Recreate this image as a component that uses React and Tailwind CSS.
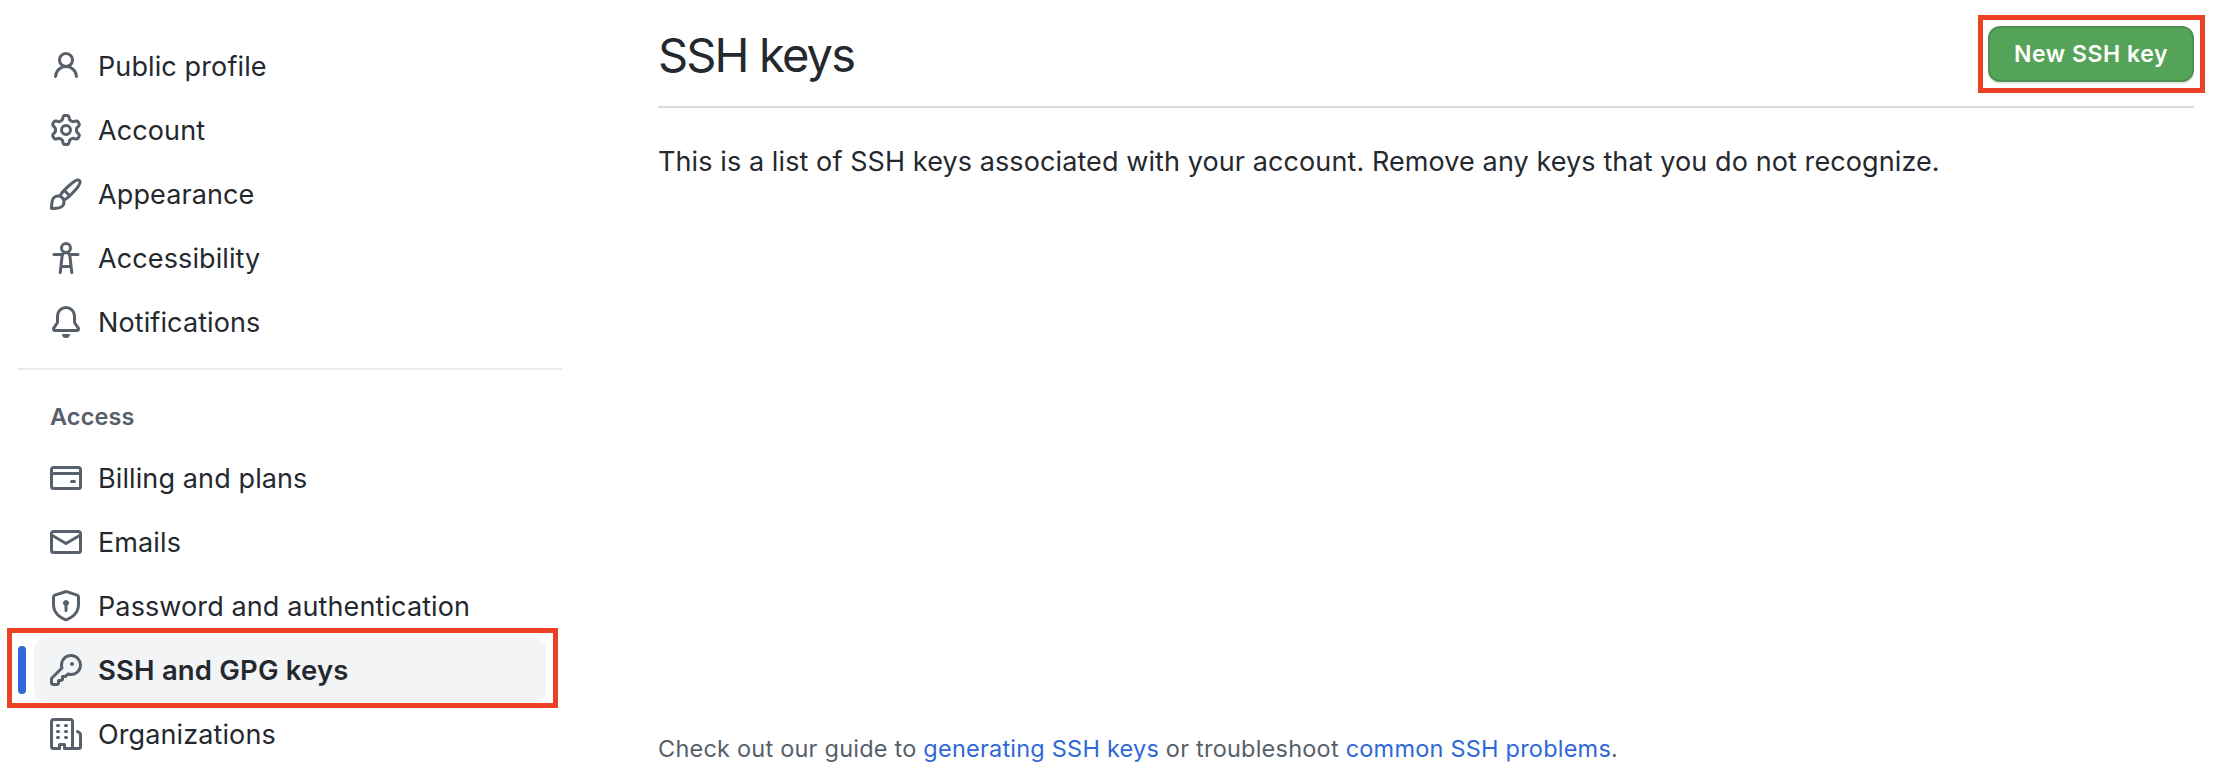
const ICONS = {
  person: "M10.561 8.073a6.005 6.005 0 0 1 3.432 5.142.75.75 0 1 1-1.498.07 4.5 4.5 0 0 0-8.99 0 .75.75 0 0 1-1.498-.07 6.004 6.004 0 0 1 3.431-5.142 3.999 3.999 0 1 1 5.123 0ZM10.5 5a2.5 2.5 0 1 0-5 0 2.5 2.5 0 0 0 5 0Z",
  gear: "M8 0a8.2 8.2 0 0 1 .701.031C9.444.095 9.99.645 10.16 1.29l.288 1.107c.018.066.079.158.212.224.231.114.454.243.668.386.123.082.233.09.299.071l1.103-.303c.644-.176 1.392.021 1.82.63.27.385.506.792.704 1.218.315.675.111 1.422-.364 1.891l-.814.806c-.049.048-.098.147-.088.294.016.257.016.515 0 .772-.01.147.038.246.088.294l.814.806c.475.469.679 1.216.364 1.891a7.977 7.977 0 0 1-.704 1.217c-.428.61-1.176.807-1.82.63l-1.102-.302c-.067-.019-.177-.011-.3.071a5.909 5.909 0 0 1-.668.386c-.133.066-.194.158-.211.224l-.29 1.106c-.168.646-.715 1.196-1.458 1.26a8.006 8.006 0 0 1-1.402 0c-.743-.064-1.289-.614-1.458-1.26l-.289-1.106c-.018-.066-.079-.158-.212-.224a5.738 5.738 0 0 1-.668-.386c-.123-.082-.233-.09-.299-.071l-1.103.303c-.644.176-1.392-.021-1.82-.63a8.12 8.12 0 0 1-.704-1.218c-.315-.675-.111-1.422.363-1.891l.815-.806c.05-.048.098-.147.088-.294a6.214 6.214 0 0 1 0-.772c.01-.147-.038-.246-.088-.294l-.815-.806C.635 6.045.431 5.298.746 4.623a7.92 7.92 0 0 1 .704-1.217c.428-.61 1.176-.807 1.82-.63l1.102.302c.067.019.177.011.3-.071.214-.143.437-.272.668-.386.133-.066.194-.158.211-.224l.29-1.106C6.009.645 6.556.095 7.299.03 7.53.01 7.764 0 8 0Zm-.571 1.525c-.036.003-.108.036-.137.146l-.289 1.105c-.147.561-.549.967-.998 1.189-.173.086-.34.183-.5.29-.417.278-.97.423-1.529.27l-1.103-.303c-.109-.03-.175.016-.195.045-.22.312-.412.644-.573.99-.014.031-.021.11.059.19l.815.806c.411.406.562.957.53 1.456a4.709 4.709 0 0 0 0 .582c.032.499-.119 1.05-.53 1.456l-.815.806c-.081.08-.073.159-.059.19.162.346.353.677.573.989.02.03.085.076.195.046l1.102-.303c.56-.153 1.113-.008 1.53.27.161.107.328.204.501.29.447.222.85.629.997 1.189l.289 1.105c.029.109.101.143.137.146a6.6 6.6 0 0 0 1.142 0c.036-.003.108-.036.137-.146l.289-1.105c.147-.561.549-.967.998-1.189.173-.086.34-.183.5-.29.417-.278.97-.423 1.529-.27l1.103.303c.109.029.175-.016.195-.045.22-.313.411-.644.573-.99.014-.031.021-.11-.059-.19l-.815-.806c-.411-.406-.562-.957-.53-1.456a4.709 4.709 0 0 0 0-.582c-.032-.499.119-1.05.53-1.456l.815-.806c.081-.08.073-.159.059-.19a6.464 6.464 0 0 0-.573-.989c-.02-.03-.085-.076-.195-.046l-1.102.303c-.56.153-1.113.008-1.53-.27a4.44 4.44 0 0 0-.501-.29c-.447-.222-.85-.629-.997-1.189l-.289-1.105c-.029-.11-.101-.143-.137-.146a6.6 6.6 0 0 0-1.142 0ZM11 8a3 3 0 1 1-6 0 3 3 0 0 1 6 0ZM9.5 8a1.5 1.5 0 1 0-3.001.001A1.5 1.5 0 0 0 9.5 8Z",
  paintbrush: "M11.134 1.535c.7-.509 1.416-.942 2.076-1.155.649-.21 1.463-.267 2.069.34.603.601.568 1.411.368 2.07-.202.668-.624 1.39-1.125 2.096-1.011 1.424-2.496 2.987-3.775 4.249-1.098 1.084-2.132 1.839-3.04 2.3a3.744 3.744 0 0 1-1.055 3.217c-.431.431-1.065.691-1.657.861-.614.177-1.294.287-1.914.357A21.151 21.151 0 0 1 .797 16H.743l.007-.75H.749L.742 16a.75.75 0 0 1-.743-.742l.743-.008-.742.007v-.054a21.25 21.25 0 0 1 .13-2.284c.067-.647.187-1.287.358-1.914.17-.591.43-1.226.86-1.657a3.746 3.746 0 0 1 3.227-1.054c.466-.893 1.225-1.907 2.314-2.982 1.271-1.255 2.833-2.75 4.245-3.777ZM1.62 13.089c-.051.464-.086.929-.104 1.395.466-.018.932-.053 1.396-.104a10.511 10.511 0 0 0 1.668-.309c.526-.151.856-.325 1.011-.48a2.25 2.25 0 1 0-3.182-3.182c-.155.155-.329.485-.48 1.01a10.515 10.515 0 0 0-.309 1.67Zm10.396-10.34c-1.224.89-2.605 2.189-3.822 3.384l1.718 1.718c1.21-1.205 2.51-2.597 3.387-3.833.47-.662.78-1.227.912-1.662.134-.444.032-.551.009-.575h-.001V1.78c-.014-.014-.113-.113-.548.027-.432.14-.995.462-1.655.942Zm-4.832 7.266-.001.001a9.859 9.859 0 0 0 1.63-1.142L7.155 7.216a9.7 9.7 0 0 0-1.161 1.607c.482.302.889.71 1.19 1.192Z",
  accessibility: "M9.923 5.302c.063.063.122.129.178.198H14A.75.75 0 0 1 14 7h-3.3l.578 5.163.362 2.997a.75.75 0 0 1-1.49.18L9.868 13H6.132l-.282 2.34a.75.75 0 0 1-1.49-.18l.362-2.997L5.3 7H2a.75.75 0 0 1 0-1.5h3.9a2.54 2.54 0 0 1 .176-.198 3 3 0 1 1 3.847 0ZM9.2 7.073h-.001a1.206 1.206 0 0 0-2.398 0L6.305 11.5h3.39ZM9.5 3a1.5 1.5 0 1 0-3.001.001A1.5 1.5 0 0 0 9.5 3Z",
  bell: "M8 16a2 2 0 0 0 1.985-1.75c.017-.137-.097-.25-.235-.25h-3.5c-.138 0-.252.113-.235.25A2 2 0 0 0 8 16ZM3 5a5 5 0 0 1 10 0v2.947c0 .05.015.098.042.139l1.703 2.555A1.519 1.519 0 0 1 13.482 13H2.518a1.516 1.516 0 0 1-1.263-2.36l1.703-2.554A.255.255 0 0 0 3 7.947Zm5-3.5A3.5 3.5 0 0 0 4.5 5v2.947c0 .346-.102.683-.294.97l-1.703 2.556a.017.017 0 0 0-.003.01l.001.006c0 .002.002.004.004.006l.006.004.007.001h10.964l.007-.001.006-.004.004-.006.001-.007a.017.017 0 0 0-.003-.01l-1.703-2.554a1.745 1.745 0 0 1-.294-.97V5A3.5 3.5 0 0 0 8 1.5Z",
  card: "M10.75 9a.75.75 0 0 0 0 1.5h1.5a.75.75 0 0 0 0-1.5h-1.5ZM0 3.75C0 2.784.784 2 1.75 2h12.5c.966 0 1.75.784 1.75 1.75v8.5A1.75 1.75 0 0 1 14.25 14H1.75A1.75 1.75 0 0 1 0 12.25ZM14.5 6.5h-13v5.75c0 .138.112.25.25.25h12.5a.25.25 0 0 0 .25-.25Zm0-2.75a.25.25 0 0 0-.25-.25H1.75a.25.25 0 0 0-.25.25V5h13Z",
  mail: "M1.75 2h12.5c.966 0 1.75.784 1.75 1.75v8.5A1.75 1.75 0 0 1 14.25 14H1.75A1.75 1.75 0 0 1 0 12.25v-8.5C0 2.784.784 2 1.75 2ZM1.5 12.251c0 .138.112.25.25.25h12.5a.25.25 0 0 0 .25-.25V5.809L8.38 9.397a.75.75 0 0 1-.76 0L1.5 5.809v6.442Zm13-8.181v-.32a.25.25 0 0 0-.25-.25H1.75a.25.25 0 0 0-.25.25v.32L8 7.88Z",
  shield: "m8.533.133 5.25 1.68A1.75 1.75 0 0 1 15 3.48V7c0 1.566-.32 3.182-1.303 4.682-.983 1.498-2.585 2.813-5.032 3.855a1.697 1.697 0 0 1-1.33 0c-2.447-1.042-4.049-2.357-5.032-3.855C1.32 10.182 1 8.566 1 7V3.48a1.75 1.75 0 0 1 1.217-1.667l5.25-1.68a1.748 1.748 0 0 1 1.066 0Zm-.61 1.429.001.001-5.25 1.68a.251.251 0 0 0-.174.237V7c0 1.36.275 2.666 1.057 3.859.784 1.194 2.121 2.342 4.366 3.298a.196.196 0 0 0 .154 0c2.245-.957 3.582-2.103 4.366-3.297C13.225 9.666 13.5 8.358 13.5 7V3.48a.25.25 0 0 0-.174-.238l-5.25-1.68a.25.25 0 0 0-.153 0ZM9.5 6.5c0 .536-.286 1.032-.75 1.3v2.45a.75.75 0 0 1-1.5 0V7.8A1.5 1.5 0 1 1 9.5 6.5Z",
  key: "M10.5 0a5.499 5.499 0 1 1-1.288 10.848l-.932.932a.749.749 0 0 1-.53.22H7v.75a.749.749 0 0 1-.22.53l-.5.5a.749.749 0 0 1-.53.22H5v.75a.749.749 0 0 1-.22.53l-.5.5a.749.749 0 0 1-.53.22h-2A1.75 1.75 0 0 1 0 14.25v-2c0-.199.079-.389.22-.53l4.932-4.932A5.5 5.5 0 0 1 10.5 0Zm-4 5.5c-.001.431.069.86.205 1.269a.75.75 0 0 1-.181.768L1.5 12.56v1.69c0 .138.112.25.25.25h1.69l.06-.06v-1.19a.75.75 0 0 1 .75-.75h1.19l.06-.06v-1.19a.75.75 0 0 1 .75-.75h1.19l1.023-1.025a.75.75 0 0 1 .768-.18A4 4 0 1 0 6.5 5.5ZM11 6a1 1 0 1 1 0-2 1 1 0 0 1 0 2Z",
  organization: "M1.75 16A1.75 1.75 0 0 1 0 14.25V1.75C0 .784.784 0 1.75 0h8.5C11.216 0 12 .784 12 1.75v12.5c0 .085-.006.168-.018.25h2.268a.25.25 0 0 0 .25-.25V8.285a.25.25 0 0 0-.111-.208l-1.055-.703a.749.749 0 1 1 .832-1.248l1.055.703c.487.325.779.871.779 1.456v5.965A1.75 1.75 0 0 1 14.25 16h-3.5a.766.766 0 0 1-.197-.026c-.099.017-.2.026-.303.026h-3a.75.75 0 0 1-.75-.75V14h-1v1.25a.75.75 0 0 1-.75.75Zm-.25-1.75c0 .138.112.25.25.25H4v-1.25a.75.75 0 0 1 .75-.75h2.5a.75.75 0 0 1 .75.75v1.25h2.25a.25.25 0 0 0 .25-.25V1.75a.25.25 0 0 0-.25-.25h-8.5a.25.25 0 0 0-.25.25ZM3.75 6h.5a.75.75 0 0 1 0 1.5h-.5a.75.75 0 0 1 0-1.5ZM3 3.75A.75.75 0 0 1 3.75 3h.5a.75.75 0 0 1 0 1.5h-.5A.75.75 0 0 1 3 3.75Zm4 3A.75.75 0 0 1 7.75 6h.5a.75.75 0 0 1 0 1.5h-.5A.75.75 0 0 1 7 6.75ZM7.75 3h.5a.75.75 0 0 1 0 1.5h-.5a.75.75 0 0 1 0-1.5ZM3 9.75A.75.75 0 0 1 3.75 9h.5a.75.75 0 0 1 0 1.5h-.5A.75.75 0 0 1 3 9.75ZM7.75 9h.5a.75.75 0 0 1 0 1.5h-.5a.75.75 0 0 1 0-1.5Z",
};

const PROFILE_ITEMS = [
  { icon: "person", label: "Public profile" },
  { icon: "gear", label: "Account" },
  { icon: "paintbrush", label: "Appearance" },
  { icon: "accessibility", label: "Accessibility" },
  { icon: "bell", label: "Notifications" },
];

const ACCESS_ITEMS = [
  { icon: "card", label: "Billing and plans" },
  { icon: "mail", label: "Emails" },
  { icon: "shield", label: "Password and authentication" },
  { icon: "key", label: "SSH and GPG keys", active: true },
  { icon: "organization", label: "Organizations" },
];

function NavItem({ icon, label, active }) {
  return (
    <li className="relative">
      <a
        href="#"
        className={
          "flex h-16 items-center gap-4 rounded-xl px-4 text-[#24292f] " +
          (active
            ? "bg-[#f3f4f6] text-[27.5px] font-semibold tracking-[0.17px]"
            : "text-[27px] tracking-[0.11px]")
        }
      >
        <svg viewBox="0 0 16 16" className="size-8 shrink-0 fill-[#57606a]" aria-hidden="true">
          <path d={ICONS[icon]} />
        </svg>
        <span className="pt-0.5 whitespace-nowrap">{label}</span>
      </a>
      {active && (
        <>
          <span className="absolute top-2 -left-4 h-12 w-2 rounded-full bg-[#2f68d8]" />
          <span className="absolute -top-[10px] -left-[27px] h-20 w-[551px] border-[5px] border-[#eb4226]" />
        </>
      )}
    </li>
  );
}

function NavList({ items }) {
  return (
    <ul className="mx-4 flex flex-col">
      {items.map((item) => (
        <NavItem key={item.label} {...item} />
      ))}
    </ul>
  );
}

export default function App() {
  return (
    <div className="flex h-[778px] w-[2226px] overflow-hidden bg-white pr-8 pl-[18px] font-['Inter',sans-serif] text-[#24292f]">
      <nav className="w-[544px] shrink-0 pt-[34px]">
        <NavList items={PROFILE_ITEMS} />
        <div className="mt-[14px] h-0.5 bg-[#e8ebf0]" />
        <h3 className="mt-[29px] mb-[11px] ml-8 text-[23.5px] leading-9 font-semibold tracking-[0.1px] text-[#57606a]">
          Access
        </h3>
        <NavList items={ACCESS_ITEMS} />
      </nav>

      <main className="ml-24 flex flex-1 flex-col">
        <header className="flex h-[108px] items-start justify-between border-b-2 border-[#d6dbe2] pt-[25px]">
          <h1 className="text-[47px] leading-[60px] font-normal tracking-[-1.85px]">SSH keys</h1>
          <div className="relative mt-px">
            <button className="flex h-14 w-[206px] items-center justify-center rounded-xl border-2 border-[#4c914f] bg-[#55a358] pt-px text-[23px] font-semibold tracking-[0.55px] text-white shadow-[0_2px_0_rgba(27,31,36,0.1)]">
              New SSH key
            </button>
            <span className="absolute -top-[11px] -left-[10px] h-[78px] w-[227px] border-[5px] border-[#eb4226]" />
          </div>
        </header>
        <p className="mt-[33px] text-[27px] leading-[42px] tracking-[0.095px]">
          This is a list of SSH keys associated with your account. Remove any keys that you do not recognize.
        </p>
        <p className="mt-auto mb-[11px] text-[23.5px] leading-9 tracking-[0.22px] text-[#57606a]">
          Check out our guide to{" "}
          <a href="#" className="text-[#2f68d8]">generating SSH keys</a> or troubleshoot{" "}
          <a href="#" className="text-[#2f68d8]">common SSH problems</a>.
        </p>
      </main>
    </div>
  );
}
